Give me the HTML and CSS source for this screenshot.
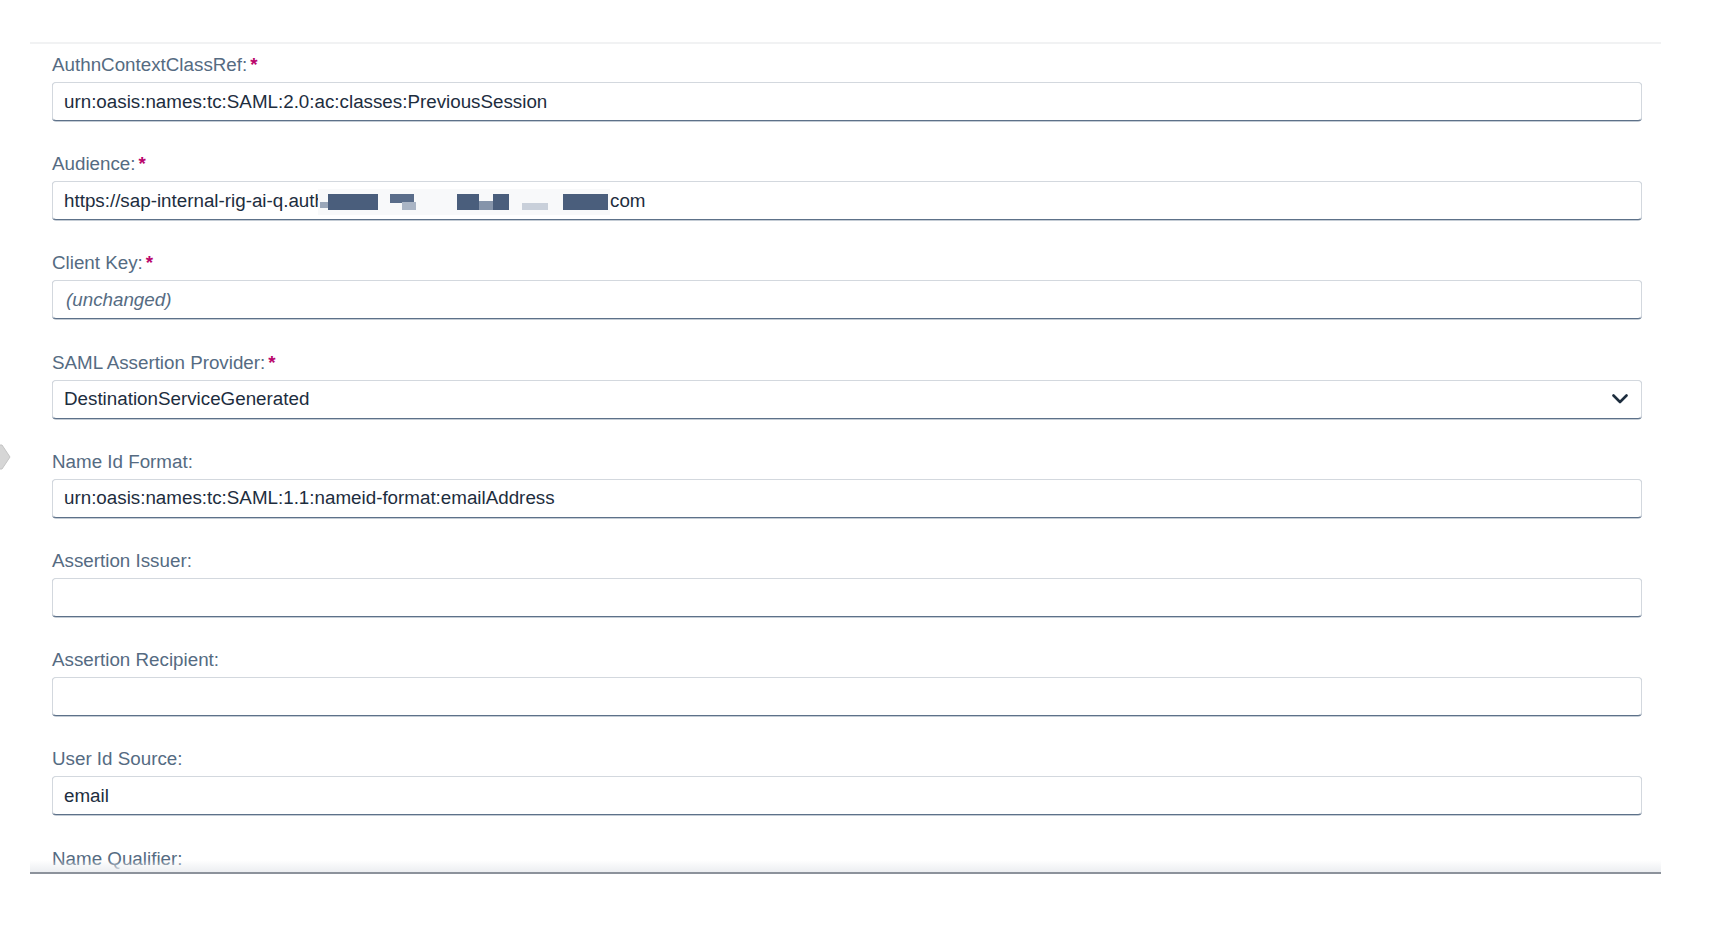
FILE: index.html
```html
<!DOCTYPE html>
<html lang="en">
<head>
<meta charset="utf-8">
<title>Destination SAML settings</title>
<link rel="stylesheet" href="styles.css">
</head>
<body>
<div class="page">
  <svg class="side-handle" width="12" height="28" viewBox="0 0 12 28" aria-hidden="true">
    <polygon points="0,1 3,1 11,13 3,25 0,25" fill="#d6d6d6" stroke="#c4c4c4" stroke-width="1"/>
  </svg>
  <div class="panel">
    <div class="form">
      <div class="field">
        <div class="label">AuthnContextClassRef:<span class="req">*</span></div>
        <div class="input">urn:oasis:names:tc:SAML:2.0:ac:classes:PreviousSession</div>
      </div>
      <div class="field">
        <div class="label">Audience:<span class="req">*</span></div>
        <div class="input"><span>https://sap-internal-rig-ai-q.auth</span><svg class="redact" width="292" height="26" viewBox="0 0 292 26" aria-hidden="true">
            <rect x="0" y="0" width="292" height="26" fill="#f8f9fa"/>
            <rect x="2" y="13" width="10" height="6" fill="#9aa7b9"/>
            <rect x="10" y="5" width="50" height="16" fill="#4a5e7c"/>
            <rect x="72" y="5" width="24" height="9" fill="#5a6d8a"/>
            <rect x="84" y="13" width="14" height="8" fill="#aab5c5"/>
            <rect x="139" y="5" width="22" height="16" fill="#4a5e7c"/>
            <rect x="161" y="12" width="14" height="9" fill="#8594aa"/>
            <rect x="175" y="5" width="16" height="16" fill="#4a5e7c"/>
            <rect x="204" y="14" width="26" height="7" fill="#c9d0da"/>
            <rect x="245" y="5" width="45" height="16" fill="#4a5e7c"/>
          </svg><span>com</span></div>
      </div>
      <div class="field">
        <div class="label">Client Key:<span class="req">*</span></div>
        <div class="input placeholder">(unchanged)</div>
      </div>
      <div class="field">
        <div class="label">SAML Assertion Provider:<span class="req">*</span></div>
        <div class="input select">
          <span>DestinationServiceGenerated</span>
          <svg class="chevron" width="16" height="10" viewBox="0 0 16 10" aria-hidden="true">
            <path d="M1.5 1.5 L8 8 L14.5 1.5" fill="none" stroke="#1d2d3e" stroke-width="2.6" stroke-linecap="round" stroke-linejoin="round"/>
          </svg>
        </div>
      </div>
      <div class="field">
        <div class="label">Name Id Format:</div>
        <div class="input">urn:oasis:names:tc:SAML:1.1:nameid-format:emailAddress</div>
      </div>
      <div class="field">
        <div class="label">Assertion Issuer:</div>
        <div class="input"></div>
      </div>
      <div class="field">
        <div class="label">Assertion Recipient:</div>
        <div class="input"></div>
      </div>
      <div class="field">
        <div class="label">User Id Source:</div>
        <div class="input">email</div>
      </div>
      <div class="field">
        <div class="label">Name Qualifier:</div>
        <div class="input"></div>
      </div>
    </div>
  </div>
</div>
</body>
</html>
```

FILE: styles.css
```css
* {
  box-sizing: border-box;
}

html, body {
  margin: 0;
  padding: 0;
  background: #ffffff;
}

body {
  font-family: "Liberation Sans", Arial, sans-serif;
  font-size: 18.8px;
  color: #1d2d3e;
}

.page {
  position: relative;
  width: 1712px;
  height: 932px;
  padding: 42px 51px 0 30px;
}

.side-handle {
  position: absolute;
  left: -1px;
  top: 444px;
}

.panel {
  position: relative;
  height: 832px;
  border-top: 2px solid #f1f2f3;
  border-bottom: 2px solid #8c929b;
  overflow: hidden;
}

.panel::after {
  content: "";
  position: absolute;
  left: 0;
  right: 0;
  bottom: 0;
  height: 12px;
  background: linear-gradient(to bottom, rgba(240, 241, 244, 0), rgba(236, 238, 241, 1));
}

.form {
  display: flex;
  flex-direction: column;
  padding: 9px 19px 0 22px;
}

.field {
  display: flex;
  flex-direction: column;
  height: 99.2px;
  flex: none;
}

.label {
  height: 24px;
  line-height: 24px;
  color: #556b82;
  white-space: nowrap;
  margin-bottom: 5px;
}

.req {
  color: #ba066c;
  font-weight: bold;
  margin-left: 3px;
}

.input {
  height: 39px;
  display: flex;
  align-items: center;
  padding: 0 11px;
  background: #ffffff;
  border: 1px solid #d3d8de;
  border-bottom: 1px solid #5d7189;
  border-radius: 4px;
  box-shadow: 0 0.5px 0 #8a99ab;
  white-space: nowrap;
  overflow: hidden;
}

.placeholder {
  color: #556b82;
  font-style: italic;
  padding-left: 13px;
}

.select {
  justify-content: space-between;
  padding-right: 13px;
}

.chevron {
  flex: none;
}

.redact {
  flex: none;
  margin-left: -7px;
  margin-top: 2px;
}
```
